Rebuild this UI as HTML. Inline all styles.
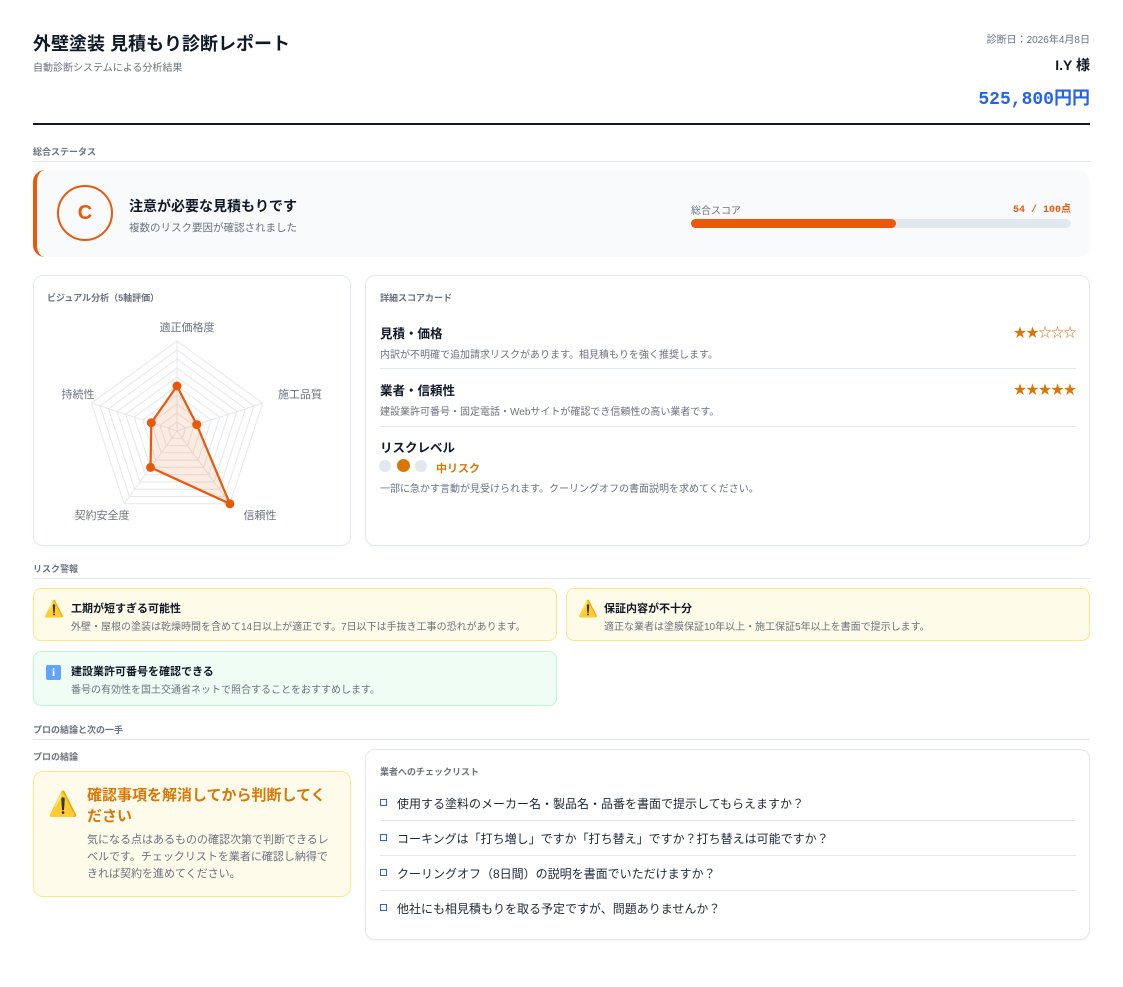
<!DOCTYPE html>
<html><head><meta charset="utf-8">
<style>
*{margin:0;padding:0;box-sizing:border-box}
body{width:1123px;height:987px;background:#fff;font-family:"Liberation Sans","Noto Sans CJK JP",sans-serif;color:#1f2937;position:relative;overflow:hidden}
.a{position:absolute;white-space:nowrap}
.sec{font-size:9px;font-weight:bold;color:#6b7280}
.hr{position:absolute;left:33px;width:1057px;height:1px;background:#e5e7eb}
.card{position:absolute;border:1px solid #e2e8f0;border-radius:10px;background:#fff;box-shadow:0 1px 2px rgba(0,0,0,.04)}
.mono{font-family:"Liberation Mono","Noto Sans CJK JP",monospace}
.alert{position:absolute;border-radius:8px}
.yel{background:#fefce8;border:1px solid #fde68a}
.grn{background:#f0fdf4;border:1px solid #bbf7d0}
.at{font-size:11px;font-weight:bold;color:#111827}
.ad{font-size:10px;color:#6b7280}
.ck{font-size:12px;color:#1f2937}
.box{display:inline-block;width:7px;height:7px;border:1px solid #2563eb;margin-right:10px;vertical-align:2px}
</style></head><body>

<div class="a" style="left:33px;top:30px;font-size:18px;font-weight:bold;color:#111827">外壁塗装 見積もり診断レポート</div>
<div class="a" style="left:33px;top:59px;font-size:10px;color:#6b7280">自動診断システムによる分析結果</div>
<div class="a" style="right:33px;top:31px;font-size:10px;color:#6b7280">診断日：2026年4月8日</div>
<div class="a" style="right:33px;top:55px;font-size:14px;font-weight:bold;color:#111827">I.Y 様</div>
<div class="a mono" style="right:33px;top:84px;font-size:18px;font-weight:bold;color:#2563eb">525,800円円</div>
<div style="position:absolute;left:33px;top:123px;width:1057px;height:2px;background:#111827"></div>

<div class="a sec" style="left:33px;top:145px">総合ステータス</div>
<div class="hr" style="top:161px"></div>

<div style="position:absolute;left:33px;top:170px;width:1057px;height:87px;background:#f8fafc;border-radius:12px;border-left:4px solid #ea580c"></div>
<div style="position:absolute;left:57px;top:185px;width:56px;height:56px;border:2px solid #ea580c;border-radius:50%;color:#ea580c;font-size:20px;font-weight:bold;text-align:center;line-height:52px">C</div>
<div class="a" style="left:129px;top:196px;font-size:14px;font-weight:bold;color:#111827">注意が必要な見積もりです</div>
<div class="a" style="left:129px;top:220px;font-size:10.5px;color:#6b7280">複数のリスク要因が確認されました</div>
<div class="a" style="left:691px;top:202px;font-size:10px;color:#6b7280">総合スコア</div>
<div class="a mono" style="right:52px;top:200px;font-size:10px;font-weight:bold;color:#ea580c">54 / 100点</div>
<div style="position:absolute;left:691px;top:219px;width:380px;height:9px;background:#e2e8f0;border-radius:5px"><div style="width:205px;height:9px;background:#ea580c;border-radius:5px"></div></div>

<div class="card" style="left:33px;top:275px;width:318px;height:271px"></div>
<div class="a sec" style="left:47px;top:291px">ビジュアル分析（5軸評価）</div>
<svg style="position:absolute;left:0;top:0" width="360" height="550">
<g transform="translate(177,431)" fill="none" stroke="#e5e7eb" stroke-width="1">
<polygon points="0,-90 85.6,-27.8 52.9,72.8 -52.9,72.8 -85.6,-27.8"/>
<polygon points="0,-81 77,-25 47.6,65.5 -47.6,65.5 -77,-25"/>
<polygon points="0,-72 68.5,-22.2 42.3,58.2 -42.3,58.2 -68.5,-22.2"/>
<polygon points="0,-63 59.9,-19.5 37,51 -37,51 -59.9,-19.5"/>
<polygon points="0,-54 51.4,-16.7 31.7,43.7 -31.7,43.7 -51.4,-16.7"/>
<polygon points="0,-45 42.8,-13.9 26.5,36.4 -26.5,36.4 -42.8,-13.9"/>
<polygon points="0,-36 34.2,-11.1 21.2,29.1 -21.2,29.1 -34.2,-11.1"/>
<polygon points="0,-27 25.7,-8.3 15.9,21.8 -15.9,21.8 -25.7,-8.3"/>
<polygon points="0,-18 17.1,-5.6 10.6,14.6 -10.6,14.6 -17.1,-5.6"/>
<polygon points="0,-9 8.6,-2.8 5.3,7.3 -5.3,7.3 -8.6,-2.8"/>
<line x1="0" y1="0" x2="0" y2="-90"/><line x1="0" y1="0" x2="85.6" y2="-27.8"/><line x1="0" y1="0" x2="52.9" y2="72.8"/><line x1="0" y1="0" x2="-52.9" y2="72.8"/><line x1="0" y1="0" x2="-85.6" y2="-27.8"/>
<polygon points="0,-45 19.7,-6.4 52.9,72.8 -26.5,36.4 -25.7,-8.3" fill="rgba(234,88,12,0.12)" stroke="#ea580c" stroke-width="2.2"/>
<g fill="#ea580c" stroke="none"><circle cx="0" cy="-45" r="4.5"/><circle cx="19.7" cy="-6.4" r="4.5"/><circle cx="52.9" cy="72.8" r="4.5"/><circle cx="-26.5" cy="36.4" r="4.5"/><circle cx="-25.7" cy="-8.3" r="4.5"/></g>
</g>
<g font-size="11" fill="#6b7280" font-family="Liberation Sans, Noto Sans CJK JP, sans-serif" text-anchor="middle">
<text x="187" y="331">適正価格度</text><text x="300" y="398">施工品質</text><text x="78" y="398">持続性</text><text x="102" y="519">契約安全度</text><text x="260" y="519">信頼性</text>
</g>
</svg>

<div class="card" style="left:365px;top:275px;width:725px;height:271px"></div>
<div class="a sec" style="left:380px;top:291px">詳細スコアカード</div>
<div class="a" style="left:380px;top:323px;font-size:12.5px;font-weight:bold;color:#111827">見積・価格</div>
<div class="a" style="right:47px;top:322px;font-size:13px;color:#d97706;letter-spacing:-0.5px">★★☆☆☆</div>
<div class="a" style="left:380px;top:346px;font-size:10px;color:#6b7280">内訳が不明確で追加請求リスクがあります。相見積もりを強く推奨します。</div>
<div style="position:absolute;left:380px;top:368px;width:696px;height:1px;background:#e2e8f0"></div>
<div class="a" style="left:380px;top:380px;font-size:12.5px;font-weight:bold;color:#111827">業者・信頼性</div>
<div class="a" style="right:47px;top:379px;font-size:13px;color:#d97706;letter-spacing:-0.5px">★★★★★</div>
<div class="a" style="left:380px;top:403px;font-size:10px;color:#6b7280">建設業許可番号・固定電話・Webサイトが確認でき信頼性の高い業者です。</div>
<div style="position:absolute;left:380px;top:426px;width:696px;height:1px;background:#e2e8f0"></div>
<div class="a" style="left:380px;top:437px;font-size:12.5px;font-weight:bold;color:#111827">リスクレベル</div>
<div style="position:absolute;left:379px;top:460px;width:12px;height:12px;border-radius:50%;background:#e2e8f0"></div>
<div style="position:absolute;left:397px;top:459px;width:13px;height:13px;border-radius:50%;background:#d97706"></div>
<div style="position:absolute;left:415px;top:460px;width:12px;height:12px;border-radius:50%;background:#e2e8f0"></div>
<div class="a" style="left:436px;top:460px;font-size:11px;font-weight:bold;color:#d97706">中リスク</div>
<div class="a" style="left:380px;top:480px;font-size:10px;color:#6b7280">一部に急かす言動が見受けられます。クーリングオフの書面説明を求めてください。</div>

<div class="a sec" style="left:33px;top:562px">リスク警報</div>
<div class="hr" style="top:578px"></div>

<div class="alert yel" style="left:33px;top:588px;width:524px;height:53px"></div>
<div class="a" style="left:44px;top:599px;font-size:16px">⚠️</div>
<div class="a at" style="left:71px;top:600px">工期が短すぎる可能性</div>
<div class="a ad" style="left:71px;top:618px">外壁・屋根の塗装は乾燥時間を含めて14日以上が適正です。7日以下は手抜き工事の恐れがあります。</div>
<div class="alert yel" style="left:566px;top:588px;width:524px;height:53px"></div>
<div class="a" style="left:578px;top:599px;font-size:16px">⚠️</div>
<div class="a at" style="left:604px;top:600px">保証内容が不十分</div>
<div class="a ad" style="left:604px;top:618px">適正な業者は塗膜保証10年以上・施工保証5年以上を書面で提示します。</div>
<div class="alert grn" style="left:33px;top:651px;width:524px;height:55px"></div>
<div style="position:absolute;left:46px;top:665px;width:15px;height:15px;background:#60a5fa;border-radius:2px;color:#fff;font-size:12px;font-weight:bold;text-align:center;line-height:15px;font-family:'Liberation Serif',serif">i</div>
<div class="a at" style="left:71px;top:663px">建設業許可番号を確認できる</div>
<div class="a ad" style="left:71px;top:681px">番号の有効性を国土交通省ネットで照合することをおすすめします。</div>

<div class="a sec" style="left:33px;top:723px">プロの結論と次の一手</div>
<div class="hr" style="top:739px"></div>
<div class="a sec" style="left:33px;top:750px">プロの結論</div>

<div style="position:absolute;left:33px;top:771px;width:318px;height:126px;background:#fffbeb;border:1px solid #fde68a;border-radius:10px"></div>
<div class="a" style="left:48px;top:790px;font-size:24px">⚠️</div>
<div style="position:absolute;left:87px;top:785px;width:242px;font-size:15px;font-weight:bold;color:#d97706;line-height:21px">確認事項を解消してから判断してください</div>
<div style="position:absolute;left:87px;top:832px;width:249px;font-size:11px;color:#6b7280;line-height:17px">気になる点はあるものの確認次第で判断できるレベルです。チェックリストを業者に確認し納得できれば契約を進めてください。</div>

<div class="card" style="left:365px;top:749px;width:725px;height:191px"></div>
<div class="a sec" style="left:380px;top:765px">業者へのチェックリスト</div>
<div class="a ck" style="left:380px;top:795px"><span class="box"></span>使用する塗料のメーカー名・製品名・品番を書面で提示してもらえますか？</div>
<div style="position:absolute;left:380px;top:820px;width:696px;height:1px;background:#e2e8f0"></div>
<div class="a ck" style="left:380px;top:830px"><span class="box"></span>コーキングは「打ち増し」ですか「打ち替え」ですか？打ち替えは可能ですか？</div>
<div style="position:absolute;left:380px;top:855px;width:696px;height:1px;background:#e2e8f0"></div>
<div class="a ck" style="left:380px;top:865px"><span class="box"></span>クーリングオフ（8日間）の説明を書面でいただけますか？</div>
<div style="position:absolute;left:380px;top:890px;width:696px;height:1px;background:#e2e8f0"></div>
<div class="a ck" style="left:380px;top:900px"><span class="box"></span>他社にも相見積もりを取る予定ですが、問題ありませんか？</div>
</body></html>
